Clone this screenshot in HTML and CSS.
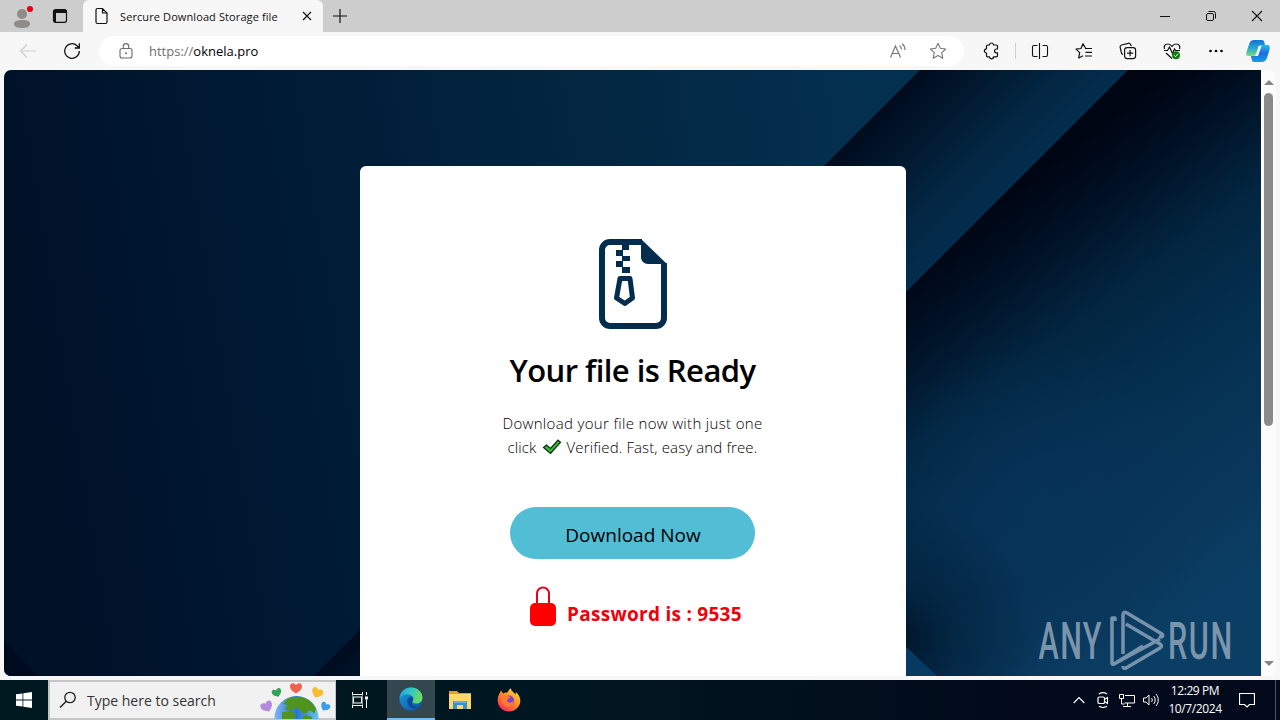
FILE: index.html
```
<!DOCTYPE html>
<html>
<head>
	<title>Sercure Download Storage file</title>
	<meta charset="UTF-8">
	<link rel="stylesheet" href="styles.css">
</head>
<body>
	<!-- tabs -->
	<header class="tabs">
		<span class="profile">
			<svg width="22" height="24" viewBox="0 0 22 24"><circle cx="11" cy="9" r="5" fill="#8f8b89"/><path d="M3 19c0-3 3-4 8-4s8 1 8 4-4 4-8 4-8-1-8-4z" fill="#8f8b89"/><circle cx="19" cy="4" r="3" fill="#e3000f"/></svg>
		</span>
		<span class="workspaces">
			<svg width="16" height="16" viewBox="0 0 16 16"><rect x="1.500" y="1.700" width="13" height="12.600" rx="2" fill="none" stroke="#111" stroke-width="1.200"/><path d="M2 2h12v3H4v9H2z" fill="#111"/></svg>
		</span>
		<div class="tab">
			<svg width="14" height="18" viewBox="0 0 14 18"><path d="M2.500 1.500h5l4.500 4.500v9a1.500 1.500 0 0 1-1.500 1.500h-8A1.500 1.500 0 0 1 1 15V3a1.500 1.500 0 0 1 1.500-1.500zM7.500 1.500V6H12" fill="none" stroke="#111" stroke-width="1.200"/></svg>
			<span class="titulo">Sercure Download Storage file</span>
			<svg width="10" height="10" viewBox="0 0 10 10"><path d="M1 1l8 8M9 1l-8 8" stroke="#111" stroke-width="1.200"/></svg>
		</div>
		<span class="nueva">
			<svg width="14" height="14" viewBox="0 0 14 14"><path d="M7 0v14M0 7h14" stroke="#111" stroke-width="1.200"/></svg>
		</span>
		<div class="ventana">
			<span><svg width="12" height="12" viewBox="0 0 12 12"><path d="M1 6.500h10" stroke="#111"/></svg></span>
			<span><svg width="12" height="12" viewBox="0 0 12 12"><rect x="1.500" y="3.500" width="7" height="7" rx="1.500" fill="none" stroke="#111"/><path d="M3.500 1.500h5a2 2 0 0 1 2 2v5" fill="none" stroke="#111"/></svg></span>
			<span><svg width="12" height="12" viewBox="0 0 12 12"><path d="M1 1l10 10M11 1L1 11" stroke="#111" stroke-width="1.100"/></svg></span>
		</div>
	</header>

	<!-- barra de direcciones -->
	<nav class="barra">
		<span class="boton atras"><svg width="18" height="16" viewBox="0 0 18 16"><path d="M17 8H1.500M8 1.500L1.500 8 8 14.500" fill="none" stroke="#cfcfcf" stroke-width="1.200"/></svg></span>
		<span class="boton"><svg width="18" height="18" viewBox="0 0 18 18"><path d="M16.300 9A7.300 7.300 0 1 1 14 3.700l2 2M16.300 1.300V6h-4.600" fill="none" stroke="#111" stroke-width="1.300"/></svg></span>
		<div class="direccion">
			<svg width="14" height="16" viewBox="0 0 14 16"><path d="M3 5.500h8a2 2 0 0 1 2 2V13a2 2 0 0 1-2 2H3a2 2 0 0 1-2-2V7.500a2 2 0 0 1 2-2zM4.300 5.500V3.300a2.700 2.700 0 0 1 5.400 0v2.200" fill="none" stroke="#6c6c6c" stroke-width="1.100"/><circle cx="7" cy="10.300" r="1" fill="#6c6c6c"/></svg>
			<span class="url">https://<b>oknela.pro</b></span>
			<span class="accion"><svg width="18" height="16" viewBox="0 0 18 16"><path d="M1.500 14.500L6.500 3l5 11.500M3.200 10.500h6.600M10.500 2.500c1.500 1 2 2.300 2 4M13 .8c2.200 1.500 3 3.600 3 6.200" fill="none" stroke="#777" stroke-width="1.200"/></svg></span>
			<span class="accion"><svg width="18" height="18" viewBox="0 0 18 18"><path d="M9 1.300l2.300 5 5.400.7-4 3.700 1.100 5.500L9 13.500l-4.800 2.700 1.100-5.500-4-3.700 5.400-.7z" fill="none" stroke="#777" stroke-width="1.100" stroke-linejoin="round"/></svg></span>
		</div>
		<span class="boton puzle"><svg width="18" height="18" viewBox="0 0 18 18"><path d="M5.500 3h2a2 2 0 0 1 4 0h3a1 1 0 0 1 1 1v3h-1a1.900 1.900 0 0 0 0 3.800h1v3a1 1 0 0 1-1 1h-3a2 2 0 0 1-4 0h-2a1 1 0 0 1-1-1v-2.800a2.100 2.100 0 0 1 0-4.200V4a1 1 0 0 1 1-1z" fill="none" stroke="#111" stroke-width="1.200" stroke-linejoin="round"/></svg></span>
		<span class="separador"></span>
		<span class="boton"><svg width="18" height="18" viewBox="0 0 18 18"><path d="M6.500 3.500H3a1.500 1.500 0 0 0-1.500 1.500v8A1.500 1.500 0 0 0 3 14.500h3.500M11.500 3.500H15A1.500 1.500 0 0 1 16.500 5v8a1.500 1.500 0 0 1-1.500 1.500h-3.500M8.500 1v16" fill="none" stroke="#111" stroke-width="1.100"/></svg></span>
		<span class="boton"><svg width="18" height="18" viewBox="0 0 18 18"><path d="M10.500 6L8 1.700 6 6.500l-5 .6 3.700 3.500-1 5.400 4.300-2.300M10 6.500h7M10.500 10.300H17M10 14h7" fill="none" stroke="#111" stroke-width="1.200" stroke-linejoin="round"/></svg></span>
		<span class="boton"><svg width="18" height="18" viewBox="0 0 18 18"><path d="M4 12.500a2 2 0 0 1-1.500-1.500L1.200 5.500A2 2 0 0 1 2.600 3l6.600-1.700a2 2 0 0 1 2.500 1.400l.4 1.500" fill="none" stroke="#111" stroke-width="1.200"/><rect x="5.600" y="5.600" width="11" height="11" rx="2.500" fill="none" stroke="#111" stroke-width="1.200"/><path d="M11.100 8v6.200M8 11.100h6.200" stroke="#111" stroke-width="1.200"/></svg></span>
		<span class="boton"><svg width="18" height="18" viewBox="0 0 18 18"><path d="M1.500 7C.5 4 2 2 5 2c2 0 3 1 4 2.300C10 3 11 2 13 2c3 0 4.500 2 3.500 5M1 8.500h3.500l2-3.500 3 6.500 2-4.500 1.200 1.500h4.300M3 11l6 5.500" fill="none" stroke="#111" stroke-width="1.200"/><circle cx="13" cy="13.200" r="4" fill="#107c10"/><path d="M11 13.200l1.500 1.500 2.700-3" fill="none" stroke="#fff"/></svg></span>
		<span class="boton"><svg width="16" height="4" viewBox="0 0 16 4"><circle cx="2.500" cy="2" r="1.300"/><circle cx="8" cy="2" r="1.300"/><circle cx="13.500" cy="2" r="1.300"/></svg></span>
		<span class="copilot"><svg width="24" height="22" viewBox="0 0 24 22">
			<defs>
				<linearGradient id="cop1" x1="0" y1="0" x2="0" y2="1"><stop offset="0" stop-color="#1172d8"/><stop offset=".5" stop-color="#25a7cf"/><stop offset="1" stop-color="#7ddc7a"/></linearGradient>
				<linearGradient id="cop2" x1="0" y1="0" x2="0" y2="1"><stop offset="0" stop-color="#2bb8f0"/><stop offset=".5" stop-color="#1b6fe0"/><stop offset="1" stop-color="#16a0dc"/></linearGradient>
			</defs>
			<path d="M8 0h8c1.500 0 2 1 2.500 3l.5 2h-3c-2 0-3 1-3.600 3L10.500 13c-.8 2-2 3-4 3H3C0 16 0 14 .5 12L3.500 3C4.200 1 6 0 8 0z" fill="url(#cop1)"/>
			<path d="M16 22H8c-1.500 0-2-1-2.500-3L5 16h2.500c2 0 3-1 3.500-3l2-5c.6-2 1.700-3 3.500-3H21c3 0 3 2 2.500 5l-3 9c-.7 2-2.500 3-4.500 3z" fill="url(#cop2)"/>
			<path d="M12.500 6h3L12 16H8.700c1-.5 1.500-1.500 2-3z" fill="#f7f7f7"/>
		</svg></span>
	</nav>

	<!-- contenido de la pagina -->
	<main class="contenido">
		<section class="pagina">
			<svg class="fondo" width="1257" height="606" viewBox="4 70 1257 606">
				<defs>
					<linearGradient id="base" gradientUnits="userSpaceOnUse" x1="4" y1="200" x2="860" y2="60"><stop offset="0" stop-color="#001128"/><stop offset=".3" stop-color="#001a35"/><stop offset=".62" stop-color="#02243f"/><stop offset="1" stop-color="#04304f"/></linearGradient>
					<linearGradient id="franja" gradientUnits="userSpaceOnUse" x1="872" y1="118" x2="976" y2="222"><stop offset="0" stop-color="#000b1e"/><stop offset=".25" stop-color="#011529"/><stop offset=".65" stop-color="#032541"/><stop offset="1" stop-color="#032d4d"/></linearGradient>
					<linearGradient id="derecha" gradientUnits="userSpaceOnUse" x1="1000" y1="198" x2="1270" y2="560"><stop offset="0" stop-color="#000513"/><stop offset=".12" stop-color="#000f22"/><stop offset=".32" stop-color="#022540"/><stop offset=".55" stop-color="#053050"/><stop offset=".8" stop-color="#09365a"/><stop offset="1" stop-color="#0b3e64"/></linearGradient>
					<radialGradient id="luz" gradientUnits="userSpaceOnUse" cx="1040" cy="510" r="170"><stop offset="0" stop-color="#08335a" stop-opacity=".8"/><stop offset="1" stop-color="#08335a" stop-opacity="0"/></radialGradient>
					<radialGradient id="sombra" gradientUnits="userSpaceOnUse" cx="900" cy="640" r="140"><stop offset="0" stop-color="#000f20" stop-opacity=".85"/><stop offset=".4" stop-color="#001a32" stop-opacity=".5"/><stop offset="1" stop-color="#001a32" stop-opacity="0"/></radialGradient>
				</defs>
				<rect x="4" y="70" width="1257" height="606" fill="url(#base)"/>
				<path d="M920 70H1128L522 676H314z" fill="url(#franja)"/>
				<path d="M1128 70H1261V676H522z" fill="url(#derecha)"/>
				<rect x="860" y="340" width="400" height="336" fill="url(#luz)"/>
				<rect x="760" y="480" width="300" height="196" fill="url(#sombra)"/>
				<path d="M900 641l37 35h-37z" fill="#073a61"/>
				<path d="M4 640l34 36H4z" fill="#000a1e"/>
			</svg>
			<div class="tarjeta">
				<svg class="zip" width="68" height="90" viewBox="0 0 68 90">
					<path d="M43 3H11a8 8 0 0 0-8 8v68a8 8 0 0 0 8 8h46a8 8 0 0 0 8-8V24" fill="none" stroke="#032d4e" stroke-width="6"/>
					<path d="M42 0L68 25H49c-4 0-7-3-7-7z" fill="#032d4e"/>
					<path d="M23 4h7v7h-6v6h7v5h-7v6h7v6h-8v-6h-6v-6h6v-5h-6v-6h6z" fill="#032d4e"/>
					<path d="M21 39.500h10l2.500 19.500-7.700 5.500L17.500 59z" fill="none" stroke="#032d4e" stroke-width="5" stroke-linejoin="round"/>
				</svg>
				<h1>Your file is Ready</h1>
				<p><span class="linea1">Download your file now with just one</span><br>
				<span class="linea2">click <svg width="20" height="16" viewBox="0 0 20 16"><path d="M1.500 8.500L4.500 6l4 3.500L16 1l2.500 2.200L8.500 14.500z" fill="#35b83b" stroke="#0b2a0b" stroke-width="1.200"/></svg> Verified. Fast, easy and free.</span></p>
				<a class="descargar">Download Now</a>
				<div class="clave">
					<svg width="26" height="40" viewBox="0 0 26 40"><path d="M7 20V7.500a6 6 0 0 1 12 0V20" fill="none" stroke="#e8001c" stroke-width="2"/><rect y="17" width="26" height="23" rx="5" fill="#f00"/></svg>
					<span>Password is : 9535</span>
				</div>
			</div>
			<svg class="marca" width="196" height="64" viewBox="1037 608 196 64">
				<g fill="#8fa6ba" fill-opacity=".85">
					<text transform="translate(1038.500 659) scale(.6 1)" class="letras" textLength="105">ANY</text>
					<text transform="translate(1168 659) scale(.6 1)" class="letras" textLength="107">RUN</text>
				</g>
				<path d="M1115 621v-3h-3v45q0 2 2 1l46-25M1123 654v-39q0-4 4-2l35 21q2 2-1 3l-2-1M1126 624l34 20q3 2 0 4l-34 20q-3 1-3-2M1114 664l29-18" fill="none" stroke="#8aa2b7" stroke-width="3.500" stroke-linejoin="round" stroke-opacity=".85"/>
			</svg>
		</section>
		<aside class="scroll">
			<svg width="10" height="5" viewBox="0 0 10 5"><path d="M5 0l5 5H0z" fill="#858585"/></svg>
			<span class="pulgar"></span>
			<svg width="10" height="5" viewBox="0 0 10 5"><path d="M5 5l5-5H0z" fill="#858585"/></svg>
		</aside>
	</main>

	<!-- barra de tareas -->
	<footer class="tareas">
		<span class="inicio"><svg width="16" height="16" viewBox="0 0 16 16"><path d="M0 2.300L6.500 1.400V7.600H0zM7.300 1.300L16 0v7.600H7.300zM0 8.400h6.500v6.200L0 13.700zM7.300 8.400H16V16l-8.700-1.300z" fill="#fff"/></svg></span>
		<div class="buscar">
			<svg width="18" height="18" viewBox="0 0 18 18"><circle cx="11" cy="6.500" r="5.200" fill="none" stroke="#222" stroke-width="1.300"/><path d="M7.300 10.200L1 16.500" stroke="#222" stroke-width="1.500"/></svg>
			<span>Type here to search</span>
			<svg class="mundo" width="72" height="37" viewBox="260 682 72 37">
				<defs>
					<linearGradient id="mar" x1="0" y1="0" x2="1" y2="0"><stop offset="0" stop-color="#7fb4f5"/><stop offset=".5" stop-color="#2477d8"/><stop offset="1" stop-color="#69c0f2"/></linearGradient>
					<path id="corazon" d="M0 5C-3 3-6 1-6-2c0-4 4-4 6-1.500C2-6 6-6 6-2 6 1 3 3 0 5z"/>
				</defs>
				<circle cx="296.500" cy="718" r="22" fill="url(#mar)"/>
				<path d="M286 700c6-4 12-4 18-2 6 2 10 6 12 11l-2 5c-2-4-6-5-7-1l-4 1-3-4-5-2-5 3-6-2 4-4-5-1zM282 712l11-1 3 5-2 3h-12zM303 716l4-1 5 2v2h-9z" fill="#4f941f"/>
				<use href="#corazon" transform="translate(296 688.500)" fill="#f0624d"/>
				<use href="#corazon" transform="translate(277 693) rotate(-20) scale(.8)" fill="#2fa45a"/>
				<use href="#corazon" transform="translate(317 693) rotate(25) scale(.95)" fill="#f6bd2d"/>
				<use href="#corazon" transform="translate(267 707) rotate(-25)" fill="#b48adf"/>
				<use href="#corazon" transform="translate(325 707) rotate(30) scale(.8)" fill="#3b9ee8"/>
			</svg>
		</div>
		<span class="app vista"><svg width="16" height="16" viewBox="0 0 16 16"><path d="M.5 0v2.500h10V0M.5 16v-2.500h10V16M14.500 0v3M14.500 8v8" fill="none" stroke="#fff"/><rect x="1.500" y="5" width="8" height="6" fill="none" stroke="#fff"/><path d="M.5 2.500v11M10.500 2.500v11" stroke="#fff" stroke-opacity=".5"/><rect x="13" y="4.500" width="3" height="3" fill="#fff"/></svg></span>
		<span class="app activa"><svg width="24" height="24" viewBox="0 0 24 24">
			<defs>
				<linearGradient id="ed1" x1="0" y1="0" x2="1" y2=".3"><stop offset="0" stop-color="#249fdf"/><stop offset=".5" stop-color="#2fc7c8"/><stop offset="1" stop-color="#6bdc62"/></linearGradient>
				<linearGradient id="ed2" x1="0" y1="0" x2="1" y2="1"><stop offset="0" stop-color="#1b9de0"/><stop offset="1" stop-color="#0d4f9e"/></linearGradient>
			</defs>
			<circle cx="12" cy="12" r="11.500" fill="url(#ed2)"/>
			<path d="M.6 11C1.500 4.500 6 .5 12 .5c7 0 11.500 5 11.500 10 0 4-3 6-6.500 6-3 0-4-1-3.500-2.200 1.200-1.500 1-3.300 0-4.500C10.500 6 4 6.500.6 11z" fill="url(#ed1)"/>
			<path d="M13.600 9.800C10 9.500 8 12 8.500 15c.5 4.500 4.500 6.800 8 6.800 2 0 3.800-.9 5.200-2.600-2.500 1.200-8.200 1.400-8.700-2.700-.2-1.700 1.800-2.500.6-6.700z" fill="#0c4a93"/>
			<path d="M22 17.500l2 0v6.500h-5.500z" fill="#33474f"/>
		</svg></span>
		<span class="app"><svg width="22" height="20" viewBox="0 0 22 20"><path d="M0 1h8l2 2h12v3H0z" fill="#e0a12c"/><path d="M0 4h22v15H0z" fill="#fcd769"/><path d="M4 11h14v8h-4v-4H8v4H4z" fill="#3a8fd2"/><path d="M5 11h12v2H5z" fill="#5fb0e4"/></svg></span>
		<span class="app"><svg width="24" height="24" viewBox="0 0 24 24">
			<defs><linearGradient id="ff" x1=".9" y1="0" x2=".2" y2="1"><stop offset="0" stop-color="#ffe23f"/><stop offset=".45" stop-color="#ff9422"/><stop offset="1" stop-color="#f7245d"/></linearGradient></defs>
			<path d="M2 6.500L4 2.500l2 3C7.500 4.500 9 4.300 10.500 4.600 11 3 12.500 1 14 .3c0 3 3 3.800 4.500 6.200.5-.7.5-1.800 0-2.800 3 2 5 6 4.800 9.300C23 19 18 23.500 12 23.500S.7 19 .7 12.500c0-2.500.3-4.500 1.300-6z" fill="url(#ff)"/>
			<circle cx="12" cy="12.500" r="5" fill="#7840d6"/>
			<path d="M4.500 8c2-1.500 4-1.200 5.500 0l3.500.7c-.2 1.500-1.500 2-2.500 2.300-1.200.5-1 2 0 3 2 1.500 4.500 0 5-1 .5 4-2.500 6-5 6-4 0-8-4.500-6.500-11z" fill="#ff7a2c"/>
		</svg></span>
		<div class="bandeja">
			<span><svg width="12" height="8" viewBox="0 0 12 8"><path d="M.7 7L6 1.500 11.300 7" fill="none" stroke="#fff" stroke-width="1.200"/></svg></span>
			<span><svg width="14" height="16" viewBox="0 0 14 16"><rect x="2" y="5" width="6.500" height="6.500" rx="1.300" fill="none" stroke="#fff" stroke-width="1.200"/><path d="M8.500 7.500L11.500 5.500v6L8.500 9.500M3 2c2.500-1.700 5.500-1.700 8 0M3 14.300c2.500 1.500 5.500 1.500 8 0" fill="none" stroke="#fff" stroke-width="1.100"/></svg></span>
			<span><svg width="16" height="14" viewBox="0 0 16 14"><path d="M6 2.500h9.500v7.500H5.500M4 13.500h8M8.500 10v3.500M.5 1.500h4v4h-4zM2.500 5.500V11h3" fill="none" stroke="#fff"/></svg></span>
			<span><svg width="16" height="14" viewBox="0 0 16 14"><path d="M.5 5h2.500L6 2v10L3 9H.5zM8.500 5c1 1.200 1 2.800 0 4M10.700 3c2 2.300 2 5.700 0 8M13 1c3 3.500 3 8.500 0 12" fill="none" stroke="#fff"/></svg></span>
			<time>12:29 PM<br>10/7/2024</time>
			<span class="avisos"><svg width="16" height="16" viewBox="0 0 16 16"><path d="M.5 1.500h15v11h-5L8 15l-2.500-2.500h-5z" fill="none" stroke="#fff" stroke-width="1.200"/></svg></span>
			<span class="escritorio"></span>
		</div>
	</footer>
</body>
</html>
```
FILE: styles.css
```
body{
    margin: 0;
    width: 1280px;
    height: 720px;
    overflow: hidden;
    display: flex;
    flex-direction: column;
    background-color: #f7f7f7;
    font-family: "Open Sans", "Noto Sans", sans-serif;
    color: #111111;
}
svg{
    display: block;
    flex: none;
}

/* tabs */
.tabs{
    display: flex;
    height: 32px;
    background-color: #cdcdcd;
}
.profile, .workspaces, .nueva, .ventana span{
    display: flex;
    align-items: center;
    justify-content: center;
}
.profile{
    width: 44px;
    padding-top: 1px;
}
.workspaces{
    width: 32px;
    margin-right: 7px;
}
.tab{
    display: flex;
    align-items: center;
    box-sizing: border-box;
    width: 240px;
    padding: 0 11px 0 12px;
    background-color: #f7f7f7;
    border-radius: 6px 6px 0 0;
}
.titulo{
    flex: 1;
    margin-left: 11px;
    font-size: 11px;
    letter-spacing: 0.1px;
    white-space: nowrap;
}
.nueva{
    width: 34px;
}
.ventana{
    display: flex;
    margin-left: auto;
}
.ventana span{
    width: 46px;
}

/* barra de direcciones */
.barra{
    display: flex;
    align-items: center;
    height: 38px;
}
.boton{
    display: flex;
    align-items: center;
    justify-content: center;
    width: 44px;
}
.atras{
    margin-left: 6px;
}
.direccion{
    display: flex;
    align-items: center;
    box-sizing: border-box;
    width: 865px;
    height: 30px;
    margin-left: 5px;
    padding: 0 6px 0 20px;
    background-color: #ffffff;
    border-radius: 15px;
}
.url{
    flex: 1;
    margin-left: 16px;
    font-size: 13px;
    color: #707070;
}
.url b{
    font-weight: normal;
    color: #000000;
}
.accion{
    display: flex;
    justify-content: center;
    width: 40px;
}
.puzle{
    margin-left: 5px;
}
.separador{
    width: 1px;
    height: 16px;
    margin: 0 2px;
    background-color: #cfcfcf;
}
.copilot{
    margin-left: 8px;
}

/* contenido */
.contenido{
    display: flex;
    height: 606px;
    margin: 0 4px 4px;
}
.pagina{
    position: relative;
    display: flex;
    justify-content: center;
    width: 1257px;
    overflow: hidden;
    border-radius: 7px 0 0 7px;
}
.fondo{
    position: absolute;
    left: 0;
    top: 0;
}
.tarjeta{
    position: relative;
    display: flex;
    flex-direction: column;
    align-items: center;
    box-sizing: border-box;
    width: 546px;
    height: 560px;
    margin-top: 96px;
    padding-top: 73px;
    background-color: #ffffff;
    border-radius: 6px;
}
h1{
    margin: 19px 0 0;
    font-size: 31px;
    font-weight: 600;
    letter-spacing: -0.55px;
    line-height: 44px;
    color: #000000;
    white-space: nowrap;
}
p{
    margin: 19px 0 0;
    font-size: 15px;
    line-height: 24px;
    font-weight: 300;
    color: #000000;
    text-align: center;
    white-space: nowrap;
}
p svg{
    display: inline-block;
    margin: 0 1px;
    vertical-align: -2px;
}
.linea1{
    letter-spacing: 0.33px;
}
.linea2{
    letter-spacing: 0.12px;
}
.descargar{
    width: 245px;
    height: 52px;
    margin-top: 48px;
    border-radius: 26px;
    background-color: #51bed6;
    font-size: 19px;
    line-height: 56px;
    text-align: center;
    text-indent: 1px;
    color: #000000;
}
.clave{
    display: flex;
    margin-top: 27px;
    gap: 11px;
    padding-left: 7px;
    font-size: 19px;
    font-weight: bold;
    letter-spacing: 0.27px;
    line-height: 56px;
    height: 40px;
    color: #f00008;
    white-space: nowrap;
}
.marca{
    position: absolute;
    right: 28px;
    bottom: 4px;
}
.letras{
    font-family: "Roboto", sans-serif;
    font-size: 51px;
    font-weight: 500;
}
.scroll{
    display: flex;
    flex-direction: column;
    align-items: center;
    box-sizing: border-box;
    width: 15px;
    padding: 10px 0;
    background-color: #fcfcfc;
    border-radius: 0 7px 7px 0;
}
.pulgar{
    width: 9px;
    height: 333px;
    margin: 8px 0 auto;
    border-radius: 5px;
    background-color: #8b8b8b;
}

/* barra de tareas */
.tareas{
    display: flex;
    height: 40px;
    background: linear-gradient(90deg, #001820, #001620 45%, #020a1b 80%);
}
.inicio, .app, .bandeja span{
    display: flex;
    align-items: center;
    justify-content: center;
}
.inicio{
    width: 48px;
}
.buscar{
    display: flex;
    align-items: center;
    box-sizing: border-box;
    width: 288px;
    border: 2px solid #c6c6c6;
    border-right-width: 1px;
    background-color: #f1f1f1;
    padding-left: 9px;
    font-size: 14px;
    color: #333333;
}
.buscar span{
    margin-left: 10px;
    white-space: nowrap;
}
.mundo{
    margin-left: auto;
    margin-right: 3px;
}
.app{
    width: 49px;
}
.vista{
    width: 48px;
}
.activa{
    box-sizing: border-box;
    width: 48px;
    margin-left: 3px;
    border-bottom: 2px solid #76b9ed;
    background-color: #33474f;
}
.bandeja{
    display: flex;
    align-items: center;
    margin-left: auto;
}
.bandeja span{
    width: 24px;
}
.bandeja time{
    width: 64px;
    font-family: "Open Sans", sans-serif;
    font-size: 12px;
    letter-spacing: -0.4px;
    line-height: 18px;
    text-align: center;
    color: #ffffff;
    white-space: nowrap;
}
.bandeja .avisos{
    width: 40px;
}
.bandeja .escritorio{
    width: 4px;
    height: 40px;
    margin-left: 8px;
    border-left: 1px solid #4d5560;
}
```
